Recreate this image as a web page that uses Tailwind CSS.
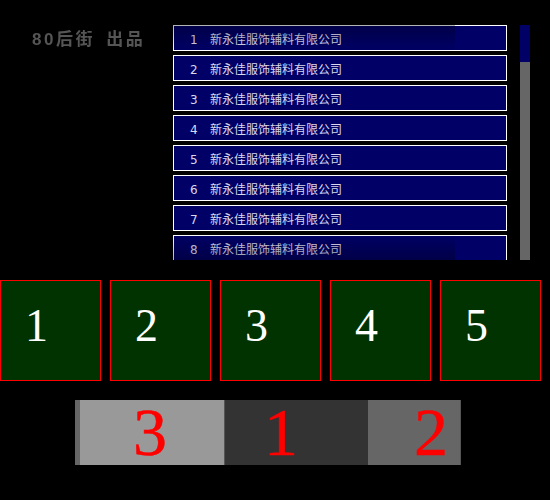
<!DOCTYPE html>
<html lang="zh-CN">
<head>
  <meta charset="UTF-8" />
  <title>80后街 出品</title>
  <script src="https://cdn.jsdelivr.net/npm/@tailwindcss/browser@4"></script>
</head>
<body class="bg-black w-[550px] h-[500px] overflow-hidden font-['DejaVu_Sans','Noto_Sans_CJK_SC',sans-serif]">
  <!-- top: title + scrolling list + scrollbar -->
  <div class="flex h-[280px] pt-[25px]">
    <div class="w-[173px] pl-[32px] pt-[4px]">
      <span class="block font-['Liberation_Sans','Noto_Sans_CJK_SC',sans-serif] text-[17px] leading-[22px] font-bold tracking-[2.5px] [word-spacing:4px] whitespace-pre text-[#555] blur-[0.7px]">80后街 出品</span>
    </div>
    <div class="relative w-[334px] h-[235px] overflow-hidden">
      <ul class="flex flex-col gap-[4px]">
        <li class="flex items-center h-[26px] border border-white bg-[#000066] pl-[16px] pt-[4px] text-[12px] text-[#d8d8ee]"><span class="w-[20px]">1</span>新永佳服饰辅料有限公司</li>
        <li class="flex items-center h-[26px] border border-white bg-[#000066] pl-[16px] pt-[4px] text-[12px] text-[#d8d8ee]"><span class="w-[20px]">2</span>新永佳服饰辅料有限公司</li>
        <li class="flex items-center h-[26px] border border-white bg-[#000066] pl-[16px] pt-[4px] text-[12px] text-[#d8d8ee]"><span class="w-[20px]">3</span>新永佳服饰辅料有限公司</li>
        <li class="flex items-center h-[26px] border border-white bg-[#000066] pl-[16px] pt-[4px] text-[12px] text-[#d8d8ee]"><span class="w-[20px]">4</span>新永佳服饰辅料有限公司</li>
        <li class="flex items-center h-[26px] border border-white bg-[#000066] pl-[16px] pt-[4px] text-[12px] text-[#d8d8ee]"><span class="w-[20px]">5</span>新永佳服饰辅料有限公司</li>
        <li class="flex items-center h-[26px] border border-white bg-[#000066] pl-[16px] pt-[4px] text-[12px] text-[#d8d8ee]"><span class="w-[20px]">6</span>新永佳服饰辅料有限公司</li>
        <li class="flex items-center h-[26px] border border-white bg-[#000066] pl-[16px] pt-[4px] text-[12px] text-[#d8d8ee]"><span class="w-[20px]">7</span>新永佳服饰辅料有限公司</li>
        <li class="flex items-center h-[26px] border border-white bg-[#000066] pl-[16px] pt-[4px] text-[12px] text-[#d8d8ee]"><span class="w-[20px]">8</span>新永佳服饰辅料有限公司</li>
      </ul>
      <!-- fade overlays at the list's top and bottom edges -->
      <div class="absolute left-0 top-0 w-[282px] h-[26px] bg-gradient-to-b from-black/30 to-transparent"></div>
      <div class="absolute left-0 bottom-0 w-[282px] h-[26px] bg-gradient-to-t from-black/30 to-transparent"></div>
    </div>
    <div class="ml-[13px] w-[10px] h-[235px] bg-[#666666]">
      <div class="h-[37px] bg-[#000066]"></div>
    </div>
  </div>

  <!-- numbered boxes -->
  <div class="flex gap-[9px] h-[120px]">
    <div class="w-[101px] h-[101px] border border-[#ff0000] bg-[#003300] pl-[24px] font-['Liberation_Serif',serif] text-[46px] leading-[90px] text-white">1</div>
    <div class="w-[101px] h-[101px] border border-[#ff0000] bg-[#003300] pl-[24px] font-['Liberation_Serif',serif] text-[46px] leading-[90px] text-white">2</div>
    <div class="w-[101px] h-[101px] border border-[#ff0000] bg-[#003300] pl-[24px] font-['Liberation_Serif',serif] text-[46px] leading-[90px] text-white">3</div>
    <div class="w-[101px] h-[101px] border border-[#ff0000] bg-[#003300] pl-[24px] font-['Liberation_Serif',serif] text-[46px] leading-[90px] text-white">4</div>
    <div class="w-[101px] h-[101px] border border-[#ff0000] bg-[#003300] pl-[24px] font-['Liberation_Serif',serif] text-[46px] leading-[90px] text-white">5</div>
  </div>

  <!-- sliding strip -->
  <div class="flex ml-[75px] w-[386px] h-[65px] font-['Liberation_Serif',serif] text-[68px] leading-[65px] text-[#ff0000] [-webkit-text-stroke:0.5px_#ff0000]">
    <div class="w-[5px] bg-[#666666]"></div>
    <div class="w-[145px] bg-[#999999] border-r border-[#555555] pl-[53px]">3</div>
    <div class="w-[143px] bg-[#333333] pl-[39px]">1</div>
    <div class="w-[93px] bg-[#666666] border-r border-[#555555] pl-[46px]">2</div>
  </div>
</body>
</html>
